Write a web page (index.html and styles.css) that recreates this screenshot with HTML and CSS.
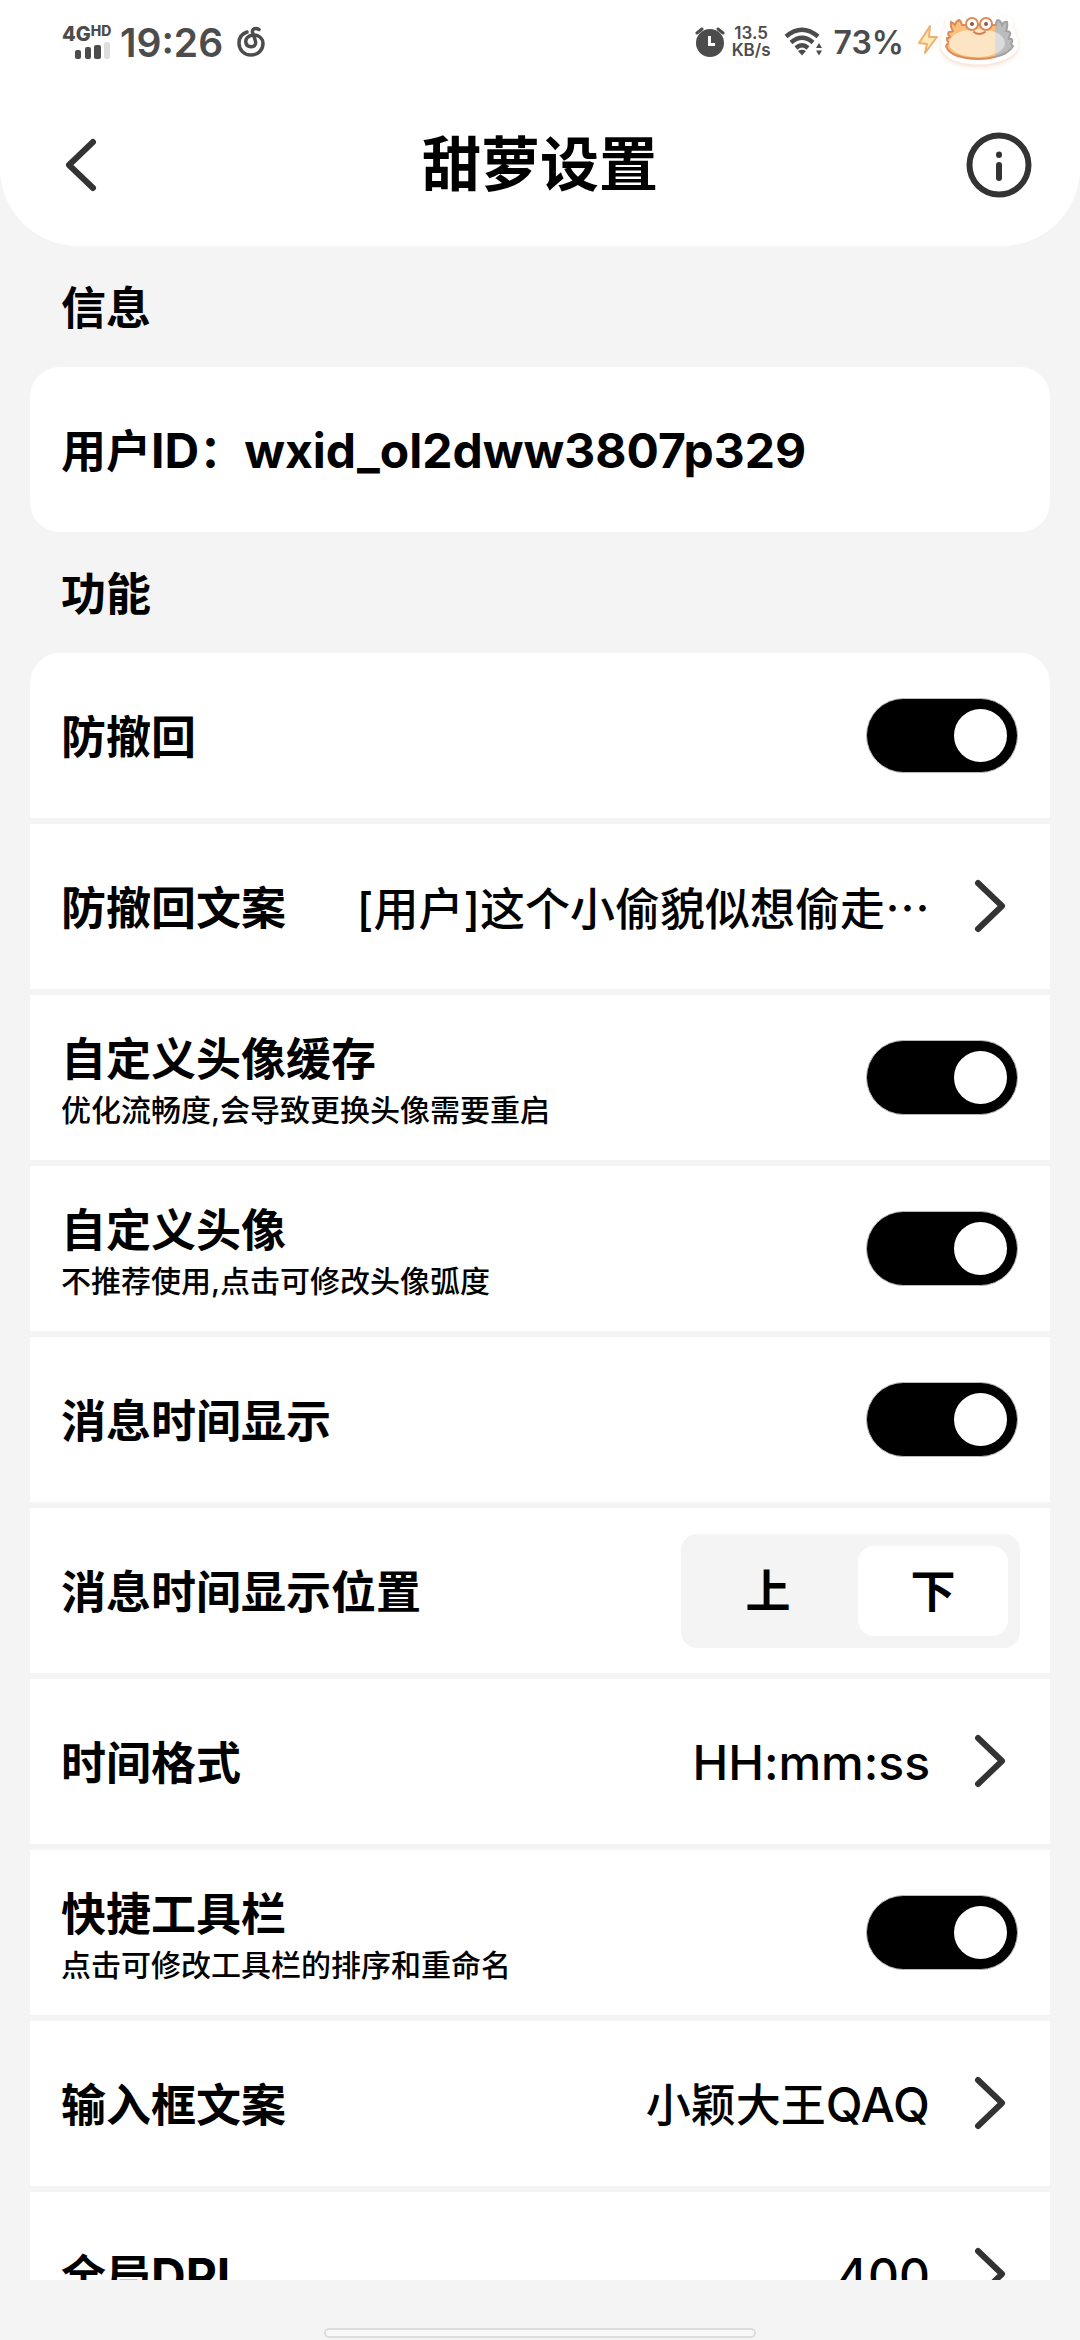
FILE: index.html
```html
<!DOCTYPE html>
<html lang="zh-CN">
  <head>
    <meta charset="UTF-8" />
    <meta name="viewport" content="width=device-width, initial-scale=1.0" />
    <title>甜萝设置</title>
    <link rel="stylesheet" href="styles.css" />
  </head>

  <body>
    <div class="top">
      <div class="status-bar">
        <div class="signal">
          <div class="network">4G<span class="hd">HD</span></div>
          <svg class="bars" width="36" height="17" viewBox="0 0 36 17">
            <rect x="0" y="8" width="6" height="9" rx="2" fill="#4c4c4c" />
            <rect x="10" y="5" width="6" height="12" rx="2" fill="#4c4c4c" />
            <rect x="19" y="3" width="7" height="14" rx="2" fill="#4c4c4c" />
            <rect x="29" y="0" width="6" height="17" rx="2" fill="#dedede" />
          </svg>
        </div>
        <span class="clock">19:26</span>
        <svg class="music" width="28" height="32" viewBox="0 0 28 32" fill="none" stroke="#4c4c4c" stroke-width="3.5" stroke-linecap="round">
          <path d="M10 6 C4 8 2 12 2 17 C2 24 7 29 14 29 C21 29 26 24 26 17.500 C26 12 21 8.500 16 9 C11 9.500 8 13 9 17 C10 21.500 17 22 18.500 18 C19.500 15 16 9 15.500 6 C15.200 2.500 19 1.500 22 3.500" />
        </svg>
        <div class="status-right">
          <svg class="alarm" width="30" height="32" viewBox="0 0 30 32">
            <circle cx="15" cy="17" r="14" fill="#4c4c4c" />
            <path d="M2 7 L7 3 M23 3 L28 7" stroke="#4c4c4c" stroke-width="3" stroke-linecap="round" />
            <path d="M14.500 10 V18.500 H20" fill="none" stroke="#fff" stroke-width="3" />
          </svg>
          <div class="speed"><span>13.5</span><span>KB/s</span></div>
          <svg class="wifi" width="40" height="30" viewBox="0 0 40 30">
            <g fill="none" stroke="#4c4c4c" stroke-width="4.500">
              <path d="M2 9.500 Q18 -4 34 9.500" />
              <path d="M7 15.500 Q18 6 29 15.500" />
              <path d="M12 21 Q18 15.500 24 21" />
            </g>
            <path d="M14 24 Q18 21.500 22 24 L18 28.500 Z" fill="#4c4c4c" />
            <path d="M32 21 L35 16 L38 21 Z M32 23.500 L35 28.500 L38 23.500 Z" fill="#4c4c4c" />
          </svg>
          <span class="battery-text">73%</span>
          <svg class="crab" width="106" height="60" viewBox="0 0 106 60">
            <defs>
              <path id="crab-body" d="M33 10 Q35 11 37 13 Q38 9 41 8 Q43 9 44 13 H78 Q78 9 80 8 Q83 9 84 13 Q86 9 89 10 Q90 14 88 19 Q93 19 92 23 Q90 26 91 27 Q95 26 94 30 Q92 32 95 34 Q93 38 88 41 Q76 47 61 47 Q45 47 35 42 Q29 38 28 34 Q29 32 31 31 Q28 28 29 26 Q32 26 32 25 Q29 22 31 20 Q34 20 35 19 Q32 15 33 10 Z" />
              <clipPath id="charged"><rect x="0" y="0" width="77" height="60" /></clipPath>
              <clipPath id="empty"><rect x="77" y="0" width="29" height="60" /></clipPath>
            </defs>
            <!-- charging bolt -->
            <path d="M12 14 L1 31 L9 32 L7 41 L19 25 L11 25 Z" fill="#fde8b8" stroke="#efb06e" stroke-width="2" stroke-linejoin="round" />
            <!-- sticker edge -->
            <g class="sticker">
              <use href="#crab-body" fill="#fff" stroke="#fff" stroke-width="11" stroke-linejoin="round" />
            </g>
            <g clip-path="url(#charged)">
              <use href="#crab-body" fill="#fac07c" stroke="#dc8b5c" stroke-width="2" />
              <ellipse cx="59" cy="31" rx="28" ry="14" fill="#fde5c4" />
            </g>
            <g clip-path="url(#empty)">
              <use href="#crab-body" fill="#bcbcbc" stroke="#a2a2a2" stroke-width="2" />
              <ellipse cx="61" cy="31" rx="26" ry="14" fill="#dcdcdc" />
            </g>
            <g fill="#fff" stroke="#dc8b5c" stroke-width="2">
              <circle cx="54" cy="12" r="6" />
              <circle cx="68" cy="12" r="6" />
            </g>
            <circle cx="54" cy="12" r="2" fill="#8f5a44" />
            <circle cx="68" cy="12" r="2" fill="#8f5a44" />
            <path d="M56 20 Q61 24 67 20" fill="none" stroke="#dc7b4c" stroke-width="2" stroke-linecap="round" />
          </svg>
        </div>
      </div>
      <header class="header">
        <button class="icon-btn" aria-label="返回">
          <svg width="66" height="66" viewBox="0 0 66 66" fill="none" stroke="#333" stroke-width="6" stroke-linecap="round" stroke-linejoin="round">
            <path d="M45 10 L21 33 L45 56" />
          </svg>
        </button>
        <h1 class="title">甜萝设置</h1>
        <button class="icon-btn" aria-label="关于">
          <svg width="66" height="66" viewBox="0 0 66 66" fill="none" stroke="#333" stroke-width="6" stroke-linecap="round">
            <circle cx="33" cy="33" r="29.500" />
            <path d="M33 33 V46 M33 22.500 V23" />
          </svg>
        </button>
      </header>
    </div>

    <main class="content">
      <h2 class="section-title">信息</h2>
      <div class="card">
        <div class="row">
          <span class="label">用户<span class="latin">ID</span>：<span class="latin">wxid_ol2dww3807p329</span></span>
        </div>
      </div>

      <h2 class="section-title">功能</h2>
      <div class="card">
        <div class="row">
          <label class="label" for="anti-recall">防撤回</label>
          <input class="toggle" type="checkbox" id="anti-recall" checked />
        </div>
        <a class="row" href="#recall-text">
          <span class="label">防撤回文案</span>
          <span class="value">[用户]这个小偷貌似想偷走<span class="dots">…</span></span>
          <svg class="arrow" width="60" height="60" viewBox="0 0 60 60"><path d="M18 6 L42 29 L18 52" /></svg>
        </a>
        <div class="row">
          <label class="label" for="avatar-cache">自定义头像缓存<small class="desc">优化流畅度,会导致更换头像需要重启</small></label>
          <input class="toggle" type="checkbox" id="avatar-cache" checked />
        </div>
        <div class="row">
          <label class="label" for="avatar">自定义头像<small class="desc">不推荐使用,点击可修改头像弧度</small></label>
          <input class="toggle" type="checkbox" id="avatar" checked />
        </div>
        <div class="row">
          <label class="label" for="msg-time">消息时间显示</label>
          <input class="toggle" type="checkbox" id="msg-time" checked />
        </div>
        <div class="row">
          <span class="label" id="pos-label">消息时间显示位置</span>
          <div class="segment" role="radiogroup" aria-labelledby="pos-label">
            <label class="option"><input type="radio" name="pos" />上</label>
            <label class="option"><input type="radio" name="pos" checked />下</label>
          </div>
        </div>
        <a class="row" href="#time-format">
          <span class="label">时间格式</span>
          <span class="value"><span class="latin">HH:mm:ss</span></span>
          <svg class="arrow" width="60" height="60" viewBox="0 0 60 60"><path d="M18 6 L42 29 L18 52" /></svg>
        </a>
        <div class="row">
          <label class="label" for="toolbar">快捷工具栏<small class="desc">点击可修改工具栏的排序和重命名</small></label>
          <input class="toggle" type="checkbox" id="toolbar" checked />
        </div>
        <a class="row" href="#input-text">
          <span class="label">输入框文案</span>
          <span class="value">小颖大王<span class="latin">QAQ</span></span>
          <svg class="arrow" width="60" height="60" viewBox="0 0 60 60"><path d="M18 6 L42 29 L18 52" /></svg>
        </a>
        <a class="row" href="#dpi">
          <span class="label">全局<span class="latin">DPI</span></span>
          <span class="value"><span class="latin">400</span></span>
          <svg class="arrow" width="60" height="60" viewBox="0 0 60 60"><path d="M18 6 L42 29 L18 52" /></svg>
        </a>
      </div>
    </main>

    <div class="nav-bar"><div class="pill"></div></div>
  </body>
</html>
```
FILE: styles.css
```css
* {
  padding: 0;
  margin: 0;
  box-sizing: border-box;
}

body {
  height: 100vh;
  display: flex;
  flex-direction: column;
  overflow: hidden;
  background: #f4f4f4;
  color: #000;
  font-family: Inter, "Noto Sans CJK SC", sans-serif;
}

button {
  border: none;
  background: none;
  cursor: pointer;
}

.top {
  background: #fff;
  border-radius: 0 0 78px 78px;
}

/* status bar */
.status-bar {
  height: 84px;
  padding: 0 56px 0 62px;
  display: flex;
  align-items: center;
  color: #4c4c4c;
}

.signal {
  width: 50px;
  margin-right: 8px;
}

.network {
  display: flex;
  font-size: 20px;
  line-height: 16px;
  font-weight: 800;
}

.hd {
  font-size: 14px;
  line-height: 10px;
}

.bars {
  display: block;
  margin-left: 13px;
}

.clock {
  font-size: 39px;
  font-weight: 600;
}

.music {
  margin-left: 14px;
}

.status-right {
  display: flex;
  align-items: center;
  margin-left: auto;
}

.speed {
  display: flex;
  flex-direction: column;
  align-items: center;
  margin: 0 13px 0 7px;
  font-size: 17px;
  line-height: 17px;
  font-weight: 600;
}

.battery-text {
  margin: 0 14px 0 10px;
  font-size: 32px;
  font-weight: 600;
}

.sticker {
  filter: drop-shadow(0 2px 2px #f6dccb);
}

/* title bar */
.header {
  height: 162px;
  padding: 0 48px;
  display: flex;
  align-items: center;
  justify-content: space-between;
}

.icon-btn svg {
  display: block;
}

.title {
  font-size: 59px;
  line-height: 80px;
  font-weight: 700;
}

/* list */
.content {
  flex: 1;
  min-height: 0;
  overflow: hidden;
  padding: 0 30px;
}

.section-title {
  padding: 4px 0 0 31px;
  line-height: 117px;
  font-size: 45px;
  font-weight: 700;
}

.card {
  display: flex;
  flex-direction: column;
  gap: 6px;
  border-radius: 30px;
  overflow: hidden;
}

.row {
  height: 165px;
  padding: 0 30px 0 31px;
  display: flex;
  align-items: center;
  background: #fff;
  color: #000;
  text-decoration: none;
}

.label {
  flex: 1;
  padding-top: 4px;
  font-size: 45px;
  line-height: 60px;
  font-weight: 700;
  white-space: nowrap;
}

.latin {
  font-size: 48px;
}

.desc {
  display: block;
  font-size: 30px;
  line-height: 40px;
  font-weight: 500;
}

.value {
  padding-top: 4px;
  font-size: 45px;
  line-height: 60px;
  font-weight: 500;
  white-space: nowrap;
}

.dots {
  font-family: "Noto Sans CJK SC", sans-serif;
}

.arrow {
  margin-left: 30px;
  fill: none;
  stroke: #333;
  stroke-width: 6;
  stroke-linecap: round;
  stroke-linejoin: round;
}

.toggle {
  appearance: none;
  width: 152px;
  height: 75px;
  padding: 10px;
  margin-right: 2px;
  display: flex;
  border: 1px solid #bbb;
  border-radius: 38px;
  background: #ccc;
  cursor: pointer;
}

.toggle::before {
  content: "";
  width: 53px;
  height: 53px;
  border-radius: 50%;
  background: #fff;
}

.toggle:checked {
  justify-content: flex-end;
  background: #000;
}

.segment {
  display: flex;
  gap: 15px;
  padding: 12px;
  border-radius: 16px;
  background: #f4f4f4;
}

.option {
  width: 150px;
  height: 90px;
  padding-top: 2px;
  border-radius: 16px;
  font-size: 45px;
  line-height: 88px;
  font-weight: 700;
  text-align: center;
  cursor: pointer;
}

.option input {
  appearance: none;
}

.option:has(input:checked) {
  background: #fff;
}

/* gesture bar */
.nav-bar {
  height: 60px;
  display: flex;
  align-items: flex-end;
  justify-content: center;
  padding-bottom: 2px;
}

.pill {
  width: 40%;
  height: 10px;
  border: 2px solid #dcdcdc;
  border-radius: 5px;
  background: #f8f8f8;
}
```
